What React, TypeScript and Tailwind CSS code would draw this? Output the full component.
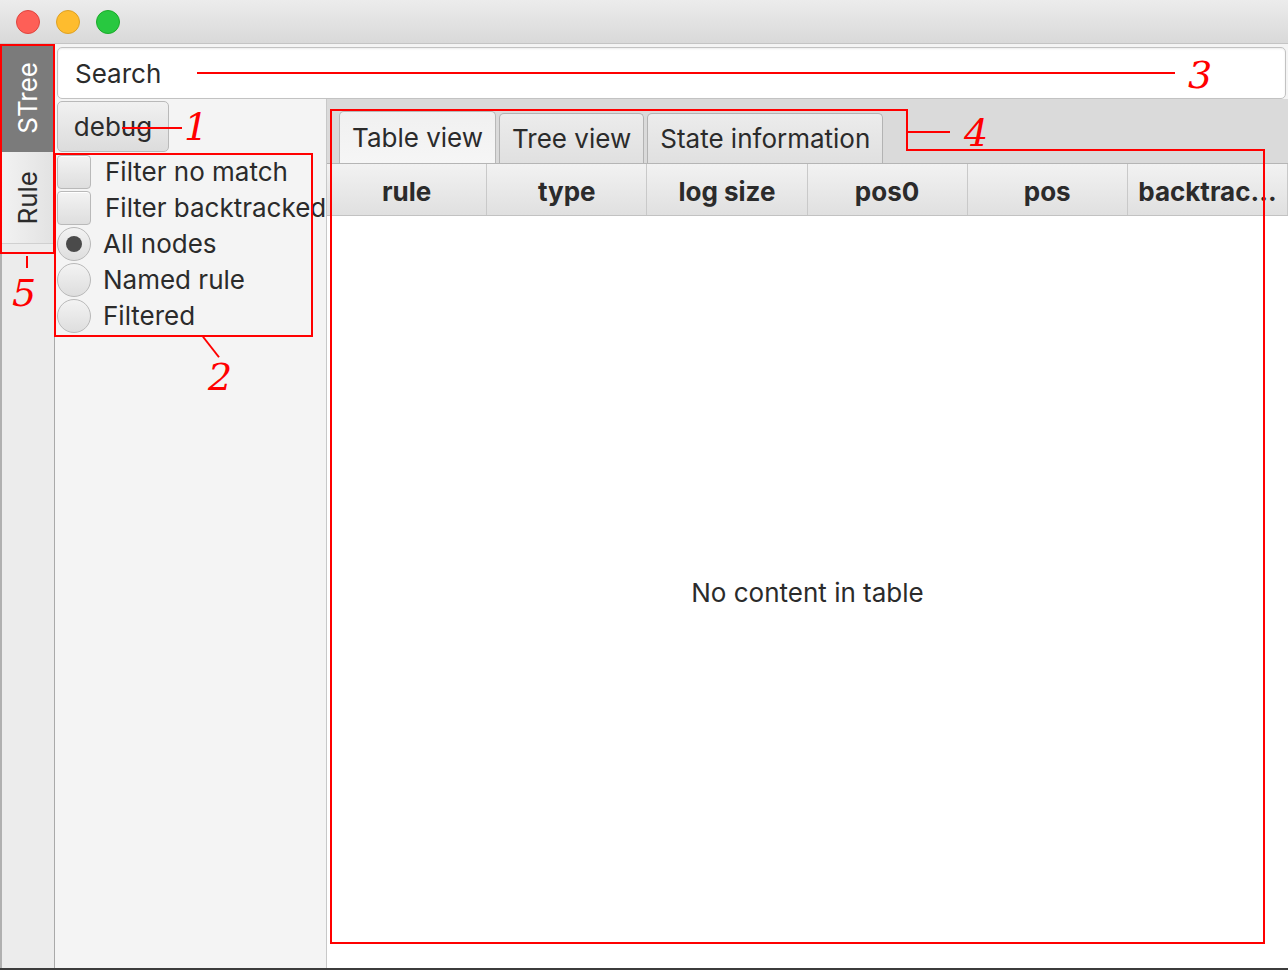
import React from 'react'

const columns = ['rule', 'type', 'log size', 'pos0', 'pos', 'backtrac...']

function CheckRow({ label }: { label: string }) {
  return (
    <div className="flex h-[36px] items-center whitespace-nowrap">
      <div className="h-[34px] w-[34px] shrink-0 rounded-[4px] border border-[#b9b9b9] bg-gradient-to-b from-[#f3f3f3] to-[#dedede] shadow-[inset_0_1px_0_#fff]" />
      <span className="ml-[14px] text-[26px] leading-none text-[#2b2b2b]">{label}</span>
    </div>
  )
}

function RadioRow({ label, checked }: { label: string; checked?: boolean }) {
  return (
    <div className="flex h-[36px] items-center whitespace-nowrap">
      <div className="flex h-[34px] w-[34px] shrink-0 items-center justify-center rounded-full border border-[#b9b9b9] bg-gradient-to-b from-[#f3f3f3] to-[#dedede]">
        {checked ? <div className="h-[16px] w-[16px] rounded-full bg-[#4a4a4a]" /> : null}
      </div>
      <span className="ml-[12px] text-[26px] leading-none text-[#2b2b2b]">{label}</span>
    </div>
  )
}

function Tab({ label, active }: { label: string; active?: boolean }) {
  return (
    <div
      className={
        active
          ? 'flex h-[52px] items-center rounded-t-[5px] border border-b-0 border-[#b8b8b8] bg-gradient-to-b from-[#f0f0f0] to-[#f6f6f6] px-[12px] text-[26px] text-[#2b2b2b]'
          : 'flex h-[50px] items-center rounded-t-[5px] border border-b-0 border-[#b3b3b3] bg-gradient-to-b from-[#ececec] to-[#e0e0e0] px-[12px] text-[26px] text-[#2b2b2b]'
      }
    >
      {label}
    </div>
  )
}

function Mark({ children, className }: { children: React.ReactNode; className: string }) {
  return (
    <span className={`absolute font-['DejaVu_Serif',serif] text-[38px] italic leading-none text-[#ff0000] ${className}`}>
      {children}
    </span>
  )
}

export default function App() {
  return (
    <div className="relative h-[970px] w-[1288px] overflow-hidden bg-[#f4f4f4] font-['Inter',sans-serif]">
      {/* title bar */}
      <div className="flex h-[44px] items-center gap-[16px] border-b border-[#c4c4c4] bg-gradient-to-b from-[#ececec] to-[#d9d9d9] pl-[16px]">
        <div className="h-[24px] w-[24px] rounded-full border border-[#e0443e] bg-[#fe5f57]" />
        <div className="h-[24px] w-[24px] rounded-full border border-[#dea123] bg-[#febc2e]" />
        <div className="h-[24px] w-[24px] rounded-full border border-[#1aab29] bg-[#28c840]" />
      </div>

      <div className="flex h-[924px]">
        {/* side tabs */}
        <div className="flex w-[55px] flex-col border-l-2 border-r border-l-[#b0b0b0] border-r-[#a9a9a9] bg-[#ececec]">
          <div className="flex h-[108px] items-center justify-center bg-[#7b7b7b]">
            <span className="rotate-180 text-[26px] leading-none text-white [writing-mode:vertical-rl]">STree</span>
          </div>
          <div className="flex h-[92px] items-center justify-center border-b border-[#d0d0d0] bg-gradient-to-r from-[#f2f2f2] to-[#e2e2e2]">
            <span className="rotate-180 text-[26px] leading-none text-[#2b2b2b] [writing-mode:vertical-rl]">Rule</span>
          </div>
        </div>

        <div className="flex flex-1 flex-col">
          {/* search */}
          <div className="px-[2px] pt-[3px]">
            <div className="flex h-[52px] items-center rounded-[5px] border border-[#c2c2c2] bg-white pl-[17px] text-[26px] text-[#2b2b2b] shadow-[inset_0_1px_2px_rgba(0,0,0,0.08)]">
              Search
            </div>
          </div>

          <div className="flex flex-1">
            {/* left controls */}
            <div className="w-[271px] shrink-0 pl-[2px] pt-[2px]">
              <div className="flex h-[51px] w-[112px] items-center justify-center rounded-[5px] border border-[#b9b9b9] bg-gradient-to-b from-[#f1f1f1] to-[#dcdcdc] text-[26px] text-[#2b2b2b]">
                debug
              </div>
              <div className="mt-[2px]">
                <CheckRow label="Filter no match" />
                <CheckRow label="Filter backtracked" />
                <RadioRow label="All nodes" checked />
                <RadioRow label="Named rule" />
                <RadioRow label="Filtered" />
              </div>
            </div>

            {/* right content */}
            <div className="flex flex-1 flex-col border-l border-[#c8c8c8] bg-white">
              <div className="flex h-[65px] items-end gap-[3px] border-b border-[#b5b5b5] bg-[#dadada] pl-[12px]">
                <Tab label="Table view" active />
                <Tab label="Tree view" />
                <Tab label="State information" />
              </div>
              <div className="grid h-[52px] grid-cols-6 border-b border-[#c2c2c2]">
                {columns.map((c) => (
                  <div
                    key={c}
                    className="flex items-center justify-center border-r border-[#c9c9c9] bg-gradient-to-b from-[#f2f2f2] to-[#e0e0e0] pt-[3px] text-[26px] font-bold text-[#2b2b2b]"
                  >
                    {c}
                  </div>
                ))}
              </div>
              <div className="flex flex-1 items-center justify-center text-[26px] text-[#2b2b2b]">
                No content in table
              </div>
            </div>
          </div>
        </div>
      </div>
      <div className="h-[2px] bg-[#3c3c3c]" />

      {/* red annotations */}
      <div className="absolute left-[0px] top-[44px] h-[210px] w-[55px] border-2 border-[#ff0000]" />
      <div className="absolute left-[26px] top-[256px] h-[12px] w-[2px] bg-[#ff0000]" />
      <Mark className="left-[12px] top-[274px]">5</Mark>

      <div className="absolute left-[122px] top-[127px] h-[2px] w-[60px] bg-[#ff0000]" />
      <Mark className="left-[184px] top-[108px]">1</Mark>

      <div className="absolute left-[54px] top-[153px] h-[184px] w-[259px] border-2 border-[#ff0000]" />
      <div className="absolute left-[198px] top-[346px] h-[2px] w-[26px] rotate-[52deg] bg-[#ff0000]" />
      <Mark className="left-[208px] top-[358px]">2</Mark>

      <div className="absolute left-[197px] top-[72px] h-[2px] w-[978px] bg-[#ff0000]" />
      <Mark className="left-[1188px] top-[56px]">3</Mark>

      <div className="absolute left-[330px] top-[109px] h-[2px] w-[578px] bg-[#ff0000]" />
      <div className="absolute left-[330px] top-[109px] h-[835px] w-[2px] bg-[#ff0000]" />
      <div className="absolute left-[906px] top-[109px] h-[42px] w-[2px] bg-[#ff0000]" />
      <div className="absolute left-[906px] top-[149px] h-[2px] w-[359px] bg-[#ff0000]" />
      <div className="absolute left-[1263px] top-[149px] h-[795px] w-[2px] bg-[#ff0000]" />
      <div className="absolute left-[330px] top-[942px] h-[2px] w-[935px] bg-[#ff0000]" />
      <div className="absolute left-[908px] top-[131px] h-[2px] w-[42px] bg-[#ff0000]" />
      <Mark className="left-[964px] top-[114px]">4</Mark>
    </div>
  )
}
